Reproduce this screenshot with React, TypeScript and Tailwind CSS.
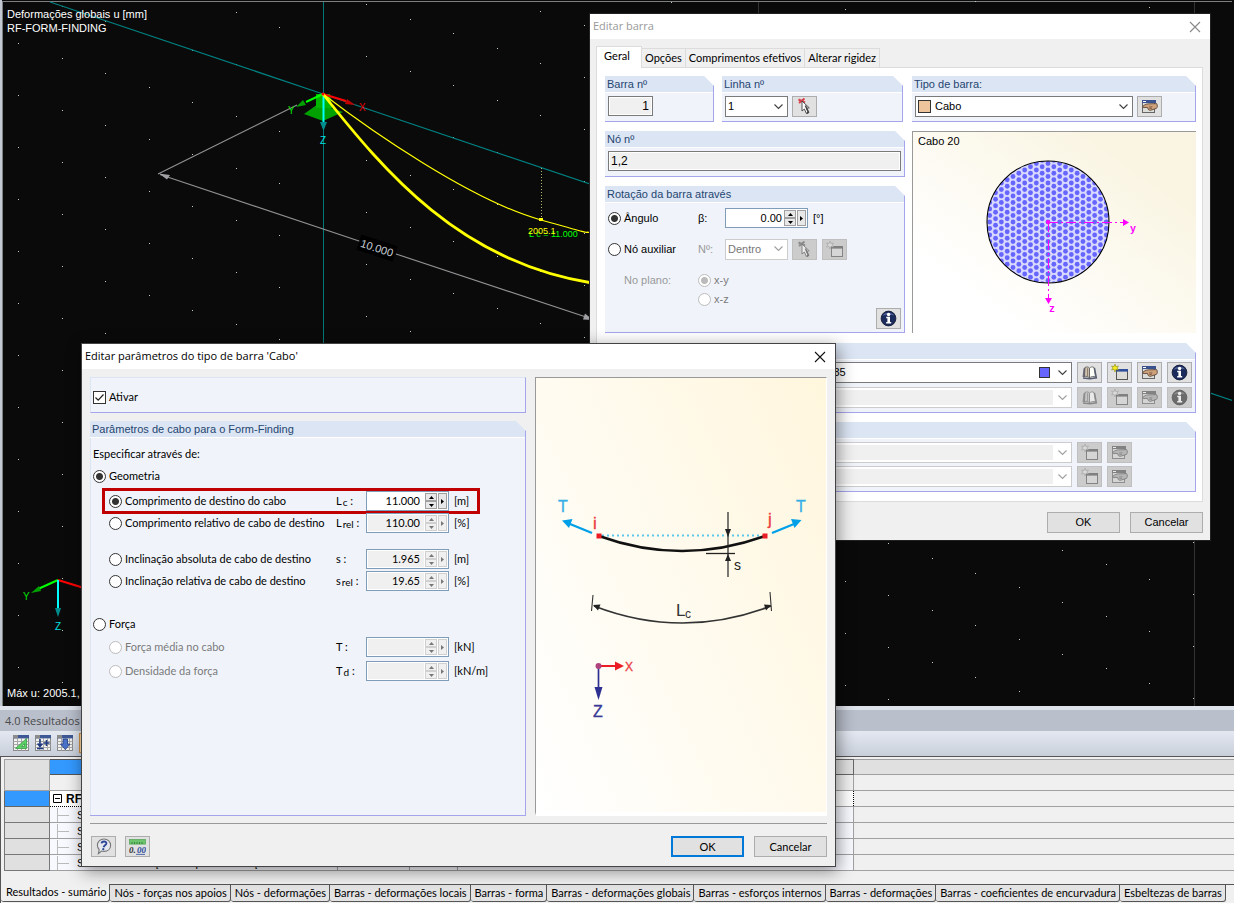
import { useState } from "react";
import type { ReactNode } from "react";

/* ---------- icons ---------- */

const ChevronIcon = ({ muted = false }: { muted?: boolean }) => (
  <svg width="9" height="6" viewBox="0 0 9 6" className="pointer-events-none absolute right-[4px] top-1/2 -translate-y-1/2">
    <path d="M0.5 0.5 L4.5 4.5 L8.5 0.5" fill="none" stroke={muted ? "#a0a0a0" : "#404040"} strokeWidth="1.1" />
  </svg>
);

const CloseIcon = ({ color }: { color: string }) => (
  <svg width="12" height="12" viewBox="0 0 12 12">
    <path d="M1 1 L11 11 M11 1 L1 11" stroke={color} strokeWidth="1.1" />
  </svg>
);

const PickIcon = () => (
  <svg width="17" height="17" viewBox="0 0 17 17">
    <path d="M2.5 1.5 L9 4.5 M8.5 0.5 L3 5" stroke="#d8404a" strokeWidth="2" />
    <path d="M6 3 L6 13 L8.4 11 L10.4 15.6 L12.6 14.7 L10.4 10.3 L13.2 9.8 Z" fill="#fff" stroke="#444" strokeWidth="0.9" />
    <path d="M9.4 7.5 L12.4 14.2 L10.8 15.2" fill="none" stroke="#444" strokeWidth="1.6" />
  </svg>
);

const NewWindowIcon = () => (
  <svg width="17" height="17" viewBox="0 0 17 17">
    <rect x="5.5" y="5.5" width="11" height="10" fill="#dddcd6" stroke="#555" />
    <rect x="5" y="5" width="12" height="2.6" fill="#2f4f9a" />
    <path d="M4 0 L4.9 2.6 L7.5 2 L6 4 L7.5 6 L4.9 5.4 L4 8 L3.1 5.4 L0.5 6 L2 4 L0.5 2 L3.1 2.6 Z" fill="#f6ee1c" stroke="#8f8a10" strokeWidth="0.6" />
  </svg>
);

const EditIcon = () => (
  <svg width="17" height="15" viewBox="0 0 17 15">
    <rect x="1.5" y="2.5" width="12" height="11" fill="#dcdcd8" stroke="#666" />
    <rect x="1" y="1" width="14" height="3" fill="#3a5390" />
    <path d="M2 2.5 H5" stroke="#fff" />
    <path d="M2 7.2 C4 5.2 7 4.6 9 4.8 L15.6 4.6 C16.6 6 16.6 8.4 15.4 9.4 L11 10.8 C9 11.8 7.6 11.2 7.2 10.2 L6.4 8.4 L3 8.6 C2 8.6 1.6 7.8 2 7.2 Z" fill="#cfa27c" stroke="#4c3a2c" strokeWidth="0.8" />
    <path d="M8 8 L11.4 7.8 M8.4 9.6 L11 9.2" stroke="#6b4d37" strokeWidth="0.8" />
  </svg>
);

const BookIcon = () => (
  <svg width="17" height="14" viewBox="0 0 17 14">
    <path d="M1.5 11 L2.5 2.5 L4 1.5 V11 Z" fill="#6a6a78" />
    <path d="M3.5 10.5 L4 1.5 C5.8 0.4 7.6 1 8.5 2.2 V12 C7 10.4 5 10 3.5 10.5 Z" fill="#cfc4b4" stroke="#555" strokeWidth="0.8" />
    <path d="M8.5 12 V2.2 C9.5 1 11.4 0.4 13 1.5 L14.5 11 C12.6 10 10 10.4 8.5 12 Z" fill="#fdfdf8" stroke="#555" strokeWidth="0.8" />
    <path d="M13.5 1.8 L15.4 11.8 L9 12.8 L2 12" fill="none" stroke="#555c70" strokeWidth="1.4" />
    <path d="M6.6 2.2 V10" stroke="#8d7763" strokeWidth="1" />
  </svg>
);

const InfoIcon = () => (
  <svg width="17" height="17" viewBox="0 0 17 17">
    <circle cx="8.5" cy="8.5" r="7.4" fill="#1b2b5c" stroke="#0c1530" strokeWidth="0.8" />
    <path d="M2.5 6 C4 2 12 1.4 14 5.6 C11 4 6 4.4 2.5 6 Z" fill="#7d92cc" opacity="0.6" />
    <circle cx="8.6" cy="4.5" r="1.7" fill="#fff" />
    <path d="M6.2 6.8 H10 V12 H11.2 V13.4 H6.2 V12 H7.4 V8.2 H6.2 Z" fill="#fff" />
  </svg>
);

const HelpIcon = () => (
  <svg width="17" height="17" viewBox="0 0 17 17">
    <path d="M9 1 C13 1 15.6 3.8 15.6 7.2 C15.6 10.8 13 13.4 9 13.4 C8 13.4 7.2 13.2 6.6 13 L3.4 15.6 L4.2 11.6 C2.9 10.4 2.4 9 2.4 7.2 C2.4 3.8 5 1 9 1 Z" fill="#e4e7ee" stroke="#777" strokeWidth="1.1" />
    <path d="M6.6 5.4 C6.8 2.8 11.6 2.8 11.4 5.4 C11.2 7.2 9 7.2 8.6 9.2" fill="none" stroke="#2c4596" strokeWidth="1.9" />
    <circle cx="8.3" cy="11.2" r="1.1" fill="#2c4596" />
  </svg>
);

const UnitsIcon = () => (
  <svg width="17" height="16" viewBox="0 0 17 16">
    <rect x="0.5" y="0.5" width="16" height="4.6" fill="#6cc46c" stroke="#5aa85f" strokeWidth="0.8" />
    <path d="M3 5 V3 M5.5 5 V3 M8 5 V3 M10.5 5 V3 M13 5 V3" stroke="#2e7a35" strokeWidth="0.8" />
    <g fontSize="9" fontStyle="italic" fontWeight="bold" fontFamily="Liberation Serif, serif">
      <text x="0" y="14" fill="#333">0.</text>
      <text x="8" y="14" fill="#2a4a9c">00</text>
    </g>
    <path d="M7 15.4 H16" stroke="#2a4a9c" strokeWidth="0.8" />
  </svg>
);

const TableIcon = ({ kind }: { kind: "slope" | "insert" | "down" | "chart" }) => (
  <svg width="16" height="16" viewBox="0 0 16 16">
    <rect x="0.5" y="0.5" width="15" height="15" fill="#f2f2f0" stroke="#8a8a8a" />
    <path d="M0.5 6.5 H15.5 M0.5 9.5 H15.5 M0.5 12.5 H15.5 M4.5 3.5 V15.5 M8.5 3.5 V15.5 M12.5 3.5 V15.5" stroke="#a8a8a8" />
    <rect x="0" y="0" width="16" height="3.4" fill="#3d5894" />
    <rect x="0" y="0" width="5" height="3.4" fill="#8b8b8b" />
    {kind === "slope" && <path d="M2.5 13.5 L13.5 3.5 V13.5 Z M8.5 11.5 H11.5 V8.8 Z" fill="#5cd267" fillRule="evenodd" stroke="#3c9a48" strokeWidth="0.8" />}
    {kind === "insert" && <path d="M5 4 V11 M2.6 8.6 L5 11.4 L7.4 8.6 M2 13.5 H8.5 M11.5 5 V11 M8.6 8 H14.6" fill="none" stroke="#1f3a80" strokeWidth="1.6" />}
    {kind === "down" && <path d="M6 4 H10.5 V9 H13 L8.3 14.6 L3.6 9 H6 Z" fill="#4a72c8" stroke="#1f3a80" strokeWidth="0.8" />}
    {kind === "chart" && <path d="M2 13 L6 8 L9 11 L14 5" fill="none" stroke="#1f3a80" strokeWidth="1.6" />}
  </svg>
);

/* ---------- form parts ---------- */

const radioClass =
  "m-0 size-[13px] shrink-0 appearance-none rounded-full border border-[#333] bg-white checked:bg-[radial-gradient(circle,#333_0px,#333_3px,#fff_4px)] disabled:border-[#bbb] disabled:checked:bg-[radial-gradient(circle,#bbb_0px,#bbb_3px,#fff_4px)]";

function Radio(props: { name: string; label: string; checked: boolean; onChange?: () => void; disabled?: boolean }) {
  return (
    <label className={`flex items-center gap-[3px] whitespace-nowrap ${props.disabled ? "text-[#7a7a7a]" : ""}`}>
      <input type="radio" name={props.name} checked={props.checked} disabled={props.disabled} onChange={() => props.onChange?.()} className={radioClass} />
      {props.label}
    </label>
  );
}

function Group({ title, htmlFor, children }: { title: string; htmlFor?: string; children: ReactNode }) {
  return (
    <section className="flex min-w-0 flex-col border-b border-r border-[#a5a5ee] bg-[#f0f4fa] [clip-path:polygon(0_0,calc(100%-10px)_0,100%_10px,100%_100%,0_100%)]">
      <div className="h-[17px] border-b border-white bg-[#dce5f4] px-[2px] font-['Liberation_Sans',Arial,sans-serif] leading-[16px] text-[#1f4570]">
        {htmlFor ? <label htmlFor={htmlFor}>{title}</label> : title}
      </div>
      {children}
    </section>
  );
}

function IconButton({ label, disabled, children }: { label: string; disabled?: boolean; children: ReactNode }) {
  return (
    <button
      type="button"
      aria-label={label}
      disabled={disabled}
      className="flex h-[21px] w-[25px] shrink-0 items-center justify-center border border-[#adadad] bg-[#e1e1e1] disabled:border-[#bfbfbf] disabled:bg-[#cccccc] disabled:[&>svg]:opacity-60 disabled:[&>svg]:grayscale"
    >
      {children}
    </button>
  );
}

function PushButton({ children, primary }: { children: ReactNode; primary?: boolean }) {
  return (
    <button
      type="button"
      className={`h-[21px] w-[73px] bg-[#e1e1e1] text-center leading-none ${primary ? "border-2 border-[#0078d7]" : "border border-[#adadad]"}`}
    >
      {children}
    </button>
  );
}

function NumberField(props: { id: string; value: string; disabled?: boolean; tight?: boolean }) {
  const face = props.disabled ? "bg-[#f0f0f0] border-[#d0d0d0]" : "bg-[#e8e8e8] border-[#a0a0a0]";
  const ink = props.disabled ? "#777" : "#000";
  return (
    <div className="flex h-[20px] w-[83px] gap-px border border-[#7f9db9] bg-white p-px">
      <input
        id={props.id}
        defaultValue={props.value}
        disabled={props.disabled}
        className={`min-w-0 flex-1 text-right text-black ${props.tight ? "pr-px" : "pr-[4px]"} ${props.disabled ? "bg-[#f0f0f0]" : "bg-white"}`}
      />
      <span className="flex w-[12px] flex-col">
        <button type="button" aria-label="Aumentar" disabled={props.disabled} className={`flex flex-1 items-center justify-center border ${face}`}>
          <svg width="5" height="3" viewBox="0 0 5 3"><path d="M0 3 L2.5 0 L5 3 Z" fill={ink} /></svg>
        </button>
        <button type="button" aria-label="Diminuir" disabled={props.disabled} className={`flex flex-1 items-center justify-center border ${face}`}>
          <svg width="5" height="3" viewBox="0 0 5 3"><path d="M0 0 L2.5 3 L5 0 Z" fill={ink} /></svg>
        </button>
      </span>
      <button type="button" aria-label="Mais" disabled={props.disabled} className={`flex w-[9px] items-center justify-center border ${face}`}>
        <svg width="3" height="5" viewBox="0 0 3 5"><path d="M0 0 L3 2.5 L0 5 Z" fill={ink} /></svg>
      </button>
    </div>
  );
}

function Combo(props: { id: string; value?: string; label?: string; disabled?: boolean; className?: string; selectClass?: string; children?: ReactNode }) {
  return (
    <div className={`relative h-[21px] border ${props.disabled ? "border-[#ccc]" : "border-[#7a7a7a]"} bg-white ${props.className ?? ""}`}>
      <select
        id={props.id}
        aria-label={props.label}
        disabled={props.disabled}
        className={`size-full appearance-none bg-transparent leading-[19px] opacity-100 disabled:text-[#777] ${props.selectClass ?? "pl-[2px]"}`}
      >
        <option>{props.value ?? ""}</option>
      </select>
      {props.children}
      <ChevronIcon muted={props.disabled} />
    </div>
  );
}

function EmptyCombo({ id, label }: { id: string; label: string }) {
  return (
    <Combo id={id} label={label} disabled className="min-w-0 flex-1" selectClass="pl-[2px]">
      <span className="pointer-events-none absolute bottom-[2px] left-[2px] right-[18px] top-[2px] bg-[#f0f0f0]" />
    </Combo>
  );
}

/* ---------- model view ---------- */

const gridDots: { x: number; y: number }[] = [];
for (let col = 0; col < 60; col++) {
  const first = (43.3 + 14.6 * col) % 52;
  for (let row = 0; row < 30; row++) {
    gridDots.push({ x: Math.round(18 + 43.5 * col), y: Math.round(first + 52 * row) });
  }
}

function ModelView() {
  return (
    <div className="relative min-h-[706px] flex-1 overflow-hidden border-l-2 border-[#c3c9d3] bg-[#0a0a0a]">
      <svg className="absolute inset-y-0 -left-[2px] size-full" fontFamily="Liberation Sans, Arial, sans-serif" fontSize="11">
        <path d="M2 1.5 H4000 M2.5 1 V3000" stroke="#7d7f80" fill="none" />
        {gridDots.map((d, i) => (
          <rect key={i} x={d.x} y={d.y} width="1" height="1" fill="#b9d2b9" />
        ))}
        <path d="M758.5 2 V3000 M1194.5 2 V3000" stroke="#333" />
        <path d="M323.5 2 V3000" stroke="#007878" fill="none" />
        <path d="M50 2 L323 94 L1830 602" stroke="#008080" fill="none" strokeWidth="1.2" />
        <path d="M158 174 L297 105 M160 174.5 L362 242 M396 254 L592 319" stroke="#909094" fill="none" strokeWidth="1.2" />
        <path d="M159 173.5 L170 175 L167 179.5 Z M593 320 L583 319.5 L585 313.5 Z" fill="#a0a0a4" />
        <g transform="translate(377 248) rotate(18)">
          <rect x="-19" y="-8" width="38" height="16" fill="#000" />
          <text x="0" y="4" textAnchor="middle" fontSize="11" fill="#c4ccd4">10.000</text>
        </g>
        <path d="M304 114 L318 104 L343 112 L323 121 Z" fill="#00a000" />
        <path d="M316 94 H330 L332 108 H316 Z" fill="#00b400" />
        <path d="M323 94 L306 102" stroke="#00ff00" strokeWidth="2" />
        <path d="M296 107 L303 100 L306 105 Z" fill="#00a000" />
        <path d="M323 94 L346 101" stroke="#f00" strokeWidth="2" />
        <path d="M355 105 L345 104 L347 99 Z" fill="#c00000" />
        <path d="M323.5 94 V122" stroke="#00ffff" strokeWidth="2" />
        <path d="M320 122 H327 L323.5 131 Z" fill="#008c8c" />
        <path d="M323 94 C370 130 470 200 541 220 S575 229 592 233" stroke="#ff0" fill="none" strokeWidth="1.2" />
        <path d="M323 94 C385 172 460 262 592 283" stroke="#ff0" fill="none" strokeWidth="2.8" />
        <circle cx="323" cy="94" r="1.5" fill="#f00" />
        <path d="M541.5 168 V218" stroke="#b8b870" strokeDasharray="1 2" />
        <rect x="539" y="218" width="4" height="3" fill="#ff0" />
        <text x="529" y="237" fontSize="9" fill="#00ff00">L c = 11.000</text>
        <text x="528" y="234" fontSize="9" fill="#ff0">2005.1</text>
        <text x="288" y="114" fontSize="10" fill="#00e000">Y</text>
        <text x="359" y="111" fontSize="10" fill="#f00000">X</text>
        <text x="320" y="144" fontSize="10" fill="#00e0e0">Z</text>

        <path d="M58 580 L38 589" stroke="#00ff00" strokeWidth="2" />
        <path d="M31 593 L39 586 L41 591 Z" fill="#00a000" />
        <path d="M58 580 L84 588" stroke="#f00" strokeWidth="2" />
        <path d="M58 580 V608" stroke="#00ffff" strokeWidth="2" />
        <path d="M55 608 H61 L58 617 Z" fill="#008c8c" />
        <text x="23" y="600" fontSize="10" fill="#00e000">Y</text>
        <text x="55" y="630" fontSize="10" fill="#00e0e0">Z</text>
      </svg>
      <div className="relative flex min-h-[706px] flex-col justify-between pb-[6px] pl-[5px] pt-[7px] leading-[14px] text-white">
        <p>
          Deformações globais u [mm]
          <br />
          RF-FORM-FINDING
        </p>
        <p>Máx u: 2005.1,</p>
      </div>
    </div>
  );
}

/* ---------- results panel ---------- */

const resultRows: { text: string; unit: string }[] = [
  { text: "Soma das cargas na direção X", unit: "kN" },
  { text: "Soma das cargas na direção Y", unit: "kN" },
  { text: "Soma das cargas na direção Z", unit: "kN" },
  { text: "Soma dos esforços de apoio na direção Y", unit: "kN" },
];

const sheetTabs = [
  "Nós - forças nos apoios",
  "Nós - deformações",
  "Barras - deformações locais",
  "Barras - forma",
  "Barras - deformações globais",
  "Barras - esforços internos",
  "Barras - deformações",
  "Barras - coeficientes de encurvadura",
  "Esbeltezas de barras",
];

function ResultsPanel() {
  const line = "border-[#a0a0a0]";
  return (
    <section className="flex flex-col overflow-hidden border-t-4 border-[#dfe3ec] bg-[#f0f0f0]">
      <h2 className="h-[21px] bg-[#b9bfcb] pl-[5px] font-['Open_Sans',sans-serif] text-[11px] leading-[21px] text-[#4a4a4a]">4.0 Resultados - sumário</h2>
      <div className="flex h-[25px] items-center gap-[6px] bg-linear-to-b from-[#e3e8f1] to-[#c9cfda] pb-px pl-[13px]">
        <button type="button" aria-label="Inclinação"><TableIcon kind="slope" /></button>
        <button type="button" aria-label="Inserir linha"><TableIcon kind="insert" /></button>
        <button type="button" aria-label="Descer"><TableIcon kind="down" /></button>
        <button type="button" aria-label="Gráfico" className="border border-[#d09040] bg-[#ffd9a0] p-px"><TableIcon kind="chart" /></button>
      </div>
      <div className="border-l border-t border-[#555] pl-[3px] pt-[2px]">
        <table className="w-full table-fixed border-collapse leading-[14px]">
          <colgroup>
            <col className="w-[45px]" />
            <col className="w-[288px]" />
            <col className="w-[72px]" />
            <col className="w-[48px]" />
            <col className="w-[396px]" />
            <col />
          </colgroup>
          <thead>
            <tr className="h-[15px] bg-[#e0e0e0]">
              <th rowSpan={2} className={`border ${line} bg-[#e0e0e0]`} />
              <th className="border border-[#555] bg-[#3399ff]" />
              <th className={`border ${line}`} />
              <th className={`border ${line}`} />
              <th className="border border-[#666]" />
              <th className={`border-y ${line}`} />
            </tr>
            <tr className="h-[16px]">
              <th className={`border ${line}`} />
              <th className={`border ${line}`} />
              <th className={`border ${line}`} />
              <th className={`border ${line}`} />
              <th className={`border-y ${line}`} />
            </tr>
          </thead>
          <tbody>
            <tr className="h-[16px]">
              <th className="border border-[#666] bg-[#3399ff]" />
              <td colSpan={4} className="border border-dotted border-black bg-white p-0 font-bold">
                <span className="flex h-[14px] items-center gap-[4px] pl-[3px] text-[12px]">
                  <svg width="9" height="9" viewBox="0 0 9 9"><path d="M0.5 0.5 H8.5 V8.5 H0.5 Z M2 4.5 H7" fill="none" stroke="#000" /></svg>
                  RF-FORM-FINDING
                </span>
              </td>
              <td className={`border-y ${line}`} />
            </tr>
            {resultRows.map((row) => (
              <tr key={row.text} className="h-[16px]">
                <th className="border border-[#777] bg-[#e0e0e0]" />
                <td className={`border-x border-b ${line} bg-[#f8f9ff] p-0`}>
                  <span className="flex h-[14px] items-center gap-[8px] pl-[7px]">
                    <svg width="12" height="14" viewBox="0 0 12 14"><path d="M0.5 0 V14 M0 7.5 H12" stroke="#bbb" /></svg>
                    {row.text}
                  </span>
                </td>
                <td className={`border ${line} bg-[#f8f9ff]`} />
                <td className={`border ${line} bg-[#f8f9ff] p-0 pl-[2px]`}>{row.unit}</td>
                <td className={`border ${line} bg-[#f8f9ff]`} />
                <td className={`border-y ${line}`} />
              </tr>
            ))}
          </tbody>
        </table>
        <div className="h-[13px]" />
      </div>
      <nav className="flex h-[20px] items-start whitespace-nowrap border-l border-[#555] font-['Lato',sans-serif] text-[11px]">
        <a href="#sumario" className="h-[18px] rounded-b-[3px] border-b border-r border-[#555] pl-[5px] pr-[3px] leading-[16px]">Resultados - sumário</a>
        {sheetTabs.map((tab) => (
          <a key={tab} href="#tabela" className="h-[18px] rounded-b-[3px] border-b border-r border-t border-[#555] bg-[#e3e3e3] pl-[4px] pr-[3px] leading-[16px]">
            {tab}
          </a>
        ))}
        <span className="h-px flex-1 bg-[#555]" />
      </nav>
    </section>
  );
}

/* ---------- member dialog ---------- */

const strands: { x: number; y: number }[] = [];
for (let col = -10; col <= 10; col++) {
  for (let row = -10; row <= 10; row++) {
    const x = 5.83 * col;
    const y = 6.5 * row + (col % 2 !== 0 ? 3.25 : 0);
    if (Math.hypot(x, y) < 63) strands.push({ x: 67 + x, y: 65 + y });
  }
}

function CrossSection() {
  return (
    <div className="flex h-[202px] flex-col border-l border-t border-[#999] bg-linear-to-tr from-white from-20% to-[#faf5e3] to-80% pl-[5px] pt-[3px]">
      <p className="leading-[13px]">Cabo 20</p>
      <svg width="160" height="160" viewBox="0 0 160 160" className="ml-[63px] mt-[9px]" fontFamily="Liberation Mono, monospace" fontSize="11">
        <defs>
          <clipPath id="section-outline">
            <circle cx="67" cy="65" r="61" />
          </clipPath>
        </defs>
        <circle cx="67" cy="65" r="61" fill="#d9d9ff" />
        <g clipPath="url(#section-outline)">
          {strands.map((s, i) => (
            <circle key={i} cx={s.x} cy={s.y} r="2.4" fill="#6666ff" />
          ))}
        </g>
        <circle cx="67" cy="65" r="61" fill="none" stroke="#000" strokeWidth="1.1" />
        <path d="M67 65.5 H142" stroke="#f0f" strokeDasharray="10 3 2 3" />
        <path d="M67.5 65 V142" stroke="#f0f" strokeDasharray="10 3 2 3" />
        <circle cx="67" cy="65" r="2" fill="#f0f" />
        <path d="M142 62 L148 65.5 L142 69 Z M64 141 H71 L67.5 147 Z" fill="#f0f" />
        <text x="149" y="75" fill="#f0f" fontWeight="bold" fontSize="10">y</text>
        <text x="68" y="155" fill="#f0f" fontWeight="bold" fontSize="10">z</text>
      </svg>
    </div>
  );
}

function MemberDialog() {
  const [rotation, setRotation] = useState("angle");
  return (
    <div role="dialog" aria-labelledby="member-title" className="absolute left-[590px] top-[14px] flex w-[620px] flex-col bg-[#f0f0f0] shadow-[0_0_0_1px_#222]">
      <header className="flex h-[25px] items-center justify-between bg-white pl-[3px] pr-[9px]">
        <h2 id="member-title" className="font-['Open_Sans',sans-serif] text-[11px] text-[#999]">Editar barra</h2>
        <button type="button" aria-label="Fechar"><CloseIcon color="#888" /></button>
      </header>
      <div role="tablist" className="flex h-[28px] items-end pl-[6px] font-['Lato',sans-serif]">
        <button type="button" role="tab" aria-selected="true" className="relative z-10 -mb-px h-[22px] w-[46px] border border-b-0 border-[#dcdcdc] bg-white pb-[4px] pr-[4px] leading-none">Geral</button>
        {["Opções", "Comprimentos efetivos", "Alterar rigidez"].map((t) => (
          <button key={t} type="button" role="tab" aria-selected="false" className="h-[19px] whitespace-nowrap border-r border-t border-[#dcdcdc] px-[3px] pb-[2px] leading-none">{t}</button>
        ))}
      </div>
      <div className="ml-[6px] mr-[7px] flex flex-col gap-[9px] border border-[#dcdcdc] bg-white pb-[9px] pl-[8px] pr-[6px] pt-[8px]">
        <div className="flex gap-[7px] pb-px">
          <div className="flex w-[300px] flex-col gap-[9px]">
            <div className="flex gap-[8px]">
              <div className="w-[109px]">
                <Group title="Barra nº" htmlFor="bar-no">
                  <div className="flex h-[28px] px-[3px] pt-[3px]">
                    <input id="bar-no" readOnly value="1" className="h-[20px] w-[45px] border border-[#7a7a7a] bg-[#f0f0f0] pr-[3px] text-right text-[12px] outline-1 -outline-offset-2 outline-white" />
                  </div>
                </Group>
              </div>
              <div className="w-[181px]">
                <Group title="Linha nº" htmlFor="line-no">
                  <div className="flex h-[28px] gap-[4px] px-[3px] pt-[3px]">
                    <Combo id="line-no" value="1" className="w-[63px]" />
                    <IconButton label="Selecionar linha"><PickIcon /></IconButton>
                  </div>
                </Group>
              </div>
            </div>
            <Group title="Nó nº" htmlFor="node-no">
              <div className="flex h-[28px] px-[3px] pt-[3px]">
                <input id="node-no" readOnly value="1,2" className="h-[20px] min-w-0 flex-1 border border-[#7a7a7a] bg-[#f0f0f0] pl-[2px] text-[12px] outline-1 -outline-offset-2 outline-white" />
              </div>
            </Group>
            <Group title="Rotação da barra através">
              <div className="flex h-[129px] flex-col pl-[3px]">
                <div className="grid h-[30px] grid-cols-[90px_27px_83px_auto] items-center">
                  <Radio name="rotation" label="Ângulo" checked={rotation === "angle"} onChange={() => setRotation("angle")} />
                  <label htmlFor="beta">β:</label>
                  <NumberField id="beta" value="0.00" tight />
                  <span className="pl-[5px]">[°]</span>
                </div>
                <div className="grid h-[32px] grid-cols-[90px_27px_63px_auto] items-center">
                  <Radio name="rotation" label="Nó auxiliar" checked={rotation === "node"} onChange={() => setRotation("node")} />
                  <label htmlFor="aux-node" className="text-[#999]">Nº:</label>
                  <Combo id="aux-node" value="Dentro" disabled />
                  <span className="flex gap-[5px] pl-[4px]">
                    <IconButton label="Selecionar nó" disabled><PickIcon /></IconButton>
                    <IconButton label="Novo nó" disabled><NewWindowIcon /></IconButton>
                  </span>
                </div>
                <div className="grid grid-cols-[90px_auto]">
                  <span className="pl-[16px] pt-[9px] leading-[13px] text-[#999]">No plano:</span>
                  <div className="flex flex-col gap-[6px] pt-[9px] leading-[13px]">
                    <Radio name="plane" label="x-y" checked disabled />
                    <Radio name="plane" label="x-z" checked={false} disabled />
                  </div>
                </div>
                <div className="flex justify-end pr-[3px] pt-[2px]">
                  <IconButton label="Informações"><InfoIcon /></IconButton>
                </div>
              </div>
            </Group>
          </div>
          <div className="flex min-w-0 flex-1 flex-col gap-[9px]">
            <Group title="Tipo de barra:" htmlFor="bar-type">
              <div className="flex h-[28px] gap-[4px] px-[3px] pt-[3px]">
                <Combo id="bar-type" value="Cabo" className="w-[218px]" selectClass="pl-[19px]">
                  <span className="pointer-events-none absolute left-[2px] top-[3px] size-[13px] border border-[#333] bg-[#eec49c]" />
                </Combo>
                <IconButton label="Editar tipo de barra"><EditIcon /></IconButton>
              </div>
            </Group>
            <CrossSection />
          </div>
        </div>
        <Group title="Seção transversal">
          <div className="flex h-[52px] flex-col gap-[4px] pl-[3px] pr-[3px] pt-[2px]">
            <div className="flex gap-[5px]">
              <Combo id="section-start" label="Início da barra" value="Cabo 20 | Aço S 235" className="min-w-0 flex-1" selectClass="pl-[136px]">
                <span className="pointer-events-none absolute right-[21px] top-[4px] size-[11px] border border-[#333] bg-[#6666ff]" />
              </Combo>
              <IconButton label="Biblioteca"><BookIcon /></IconButton>
              <IconButton label="Nova seção"><NewWindowIcon /></IconButton>
              <IconButton label="Editar seção"><EditIcon /></IconButton>
              <IconButton label="Informações da seção"><InfoIcon /></IconButton>
            </div>
            <div className="flex gap-[5px]">
              <EmptyCombo id="section-end" label="Fim da barra" />
              <IconButton label="Biblioteca" disabled><BookIcon /></IconButton>
              <IconButton label="Nova seção" disabled><NewWindowIcon /></IconButton>
              <IconButton label="Editar seção" disabled><EditIcon /></IconButton>
              <IconButton label="Informações da seção" disabled><InfoIcon /></IconButton>
            </div>
          </div>
        </Group>
        <Group title="Articulação na barra">
          <div className="flex h-[52px] flex-col gap-[3px] pl-[3px] pr-[63px] pt-[3px]">
            {["Articulação inicial", "Articulação final"].map((name) => (
              <div key={name} className="flex gap-[5px]">
                <EmptyCombo id={name} label={name} />
                <IconButton label={`Nova: ${name}`} disabled><NewWindowIcon /></IconButton>
                <IconButton label={`Editar: ${name}`} disabled><EditIcon /></IconButton>
              </div>
            ))}
          </div>
        </Group>
      </div>
      <footer className="flex justify-end gap-[10px] pb-[7px] pr-[7px] pt-[10px]">
        <PushButton>OK</PushButton>
        <PushButton>Cancelar</PushButton>
      </footer>
    </div>
  );
}

/* ---------- cable parameters dialog ---------- */

function CableSketch() {
  return (
    <div className="min-w-0 border-b-4 border-l border-r border-t border-b-white border-l-[#999] border-r-white border-t-[#999] bg-linear-[65deg] from-white to-[#fff6dd]">
      <svg width="290" height="400" viewBox="0 0 290 400" fontFamily="Liberation Sans, Arial, sans-serif">
        <path d="M66 157.5 H226" stroke="#5cc8ee" strokeWidth="2" strokeDasharray="2 3" />
        <path d="M63 158 Q146 188 229 158" fill="none" stroke="#111" strokeWidth="2.4" />
        <path d="M192 134 V199" stroke="#222" strokeWidth="1.2" />
        <path d="M170 175.5 H199" stroke="#222" strokeWidth="1.3" />
        <path d="M189 151 H195 L192 159 Z M189 183 H195 L192 176 Z" fill="#222" />
        <path d="M60.5 155.5 h5 v5 h-5 Z M226.5 155.5 h5 v5 h-5 Z" fill="#ec1c24" />
        <path d="M56 155 L34 146 M236 155 L258 146" stroke="#00a0e8" strokeWidth="2.4" />
        <path d="M26 142.5 L36.5 141 L33 150 Z M265.5 142 L255 141 L258.5 150 Z" fill="#00a0e8" />
        <g fontSize="16" fill="#34aee6" stroke="#34aee6" strokeWidth="0.3">
          <text x="22" y="134">T</text>
          <text x="260" y="134">T</text>
        </g>
        <g fontSize="17" fill="#ec3a40" stroke="#ec3a40" strokeWidth="0.3">
          <text x="57" y="151">i</text>
          <text x="232" y="147">j</text>
        </g>
        <text x="198" y="192" fontSize="14" fill="#222">s</text>
        <path d="M58 228 Q146 262 235 228" fill="none" stroke="#333" strokeWidth="1.7" />
        <path d="M57 217 L55.5 233 M234 214 L235.5 233" stroke="#333" strokeWidth="1.1" />
        <path d="M57 227 L64.5 226.5 L62 232.5 Z M235 227 L228 226.5 L230 232.5 Z" fill="#222" />
        <text x="140" y="238" fontSize="17" fill="#333">L</text>
        <text x="149" y="240" fontSize="12" fill="#333">c</text>
        <path d="M63 288 H80" stroke="#ec1c24" strokeWidth="2" />
        <path d="M79 283.5 L88 288 L79 292.5 Z" fill="#ec1c24" />
        <path d="M62.5 288 V312" stroke="#2e3192" strokeWidth="1.7" />
        <path d="M58.5 309 H66.5 L62.5 322 Z" fill="#2e3192" />
        <circle cx="62.5" cy="288" r="3" fill="#b0427e" />
        <text x="89" y="293" fontSize="12" fill="#ec3a40" stroke="#ec3a40" strokeWidth="0.3">X</text>
        <text x="57" y="339" fontSize="16" fill="#3a3a96" stroke="#3a3a96" strokeWidth="0.3">Z</text>
      </svg>
    </div>
  );
}

type ParamRowProps = {
  id: string;
  label: string;
  symbol: ReactNode;
  value: string;
  unit: string;
  checked?: boolean;
  off?: boolean;
  className?: string;
  highlight?: boolean;
  onSelect?: () => void;
};

function ParamRow(p: ParamRowProps) {
  return (
    <div className={`relative grid h-[22px] grid-cols-[227px_30px_83px_auto] items-center pl-[18px] ${p.className ?? ""}`}>
      <Radio name="cable-param" label={p.label} checked={!!p.checked} disabled={p.off} onChange={p.onSelect} />
      <label htmlFor={p.id}>{p.symbol}</label>
      <NumberField id={p.id} value={p.value} disabled={!p.checked} />
      <span className="pl-[5px]">{p.unit}</span>
      {p.highlight && <span className="pointer-events-none absolute -bottom-[2px] -top-[2px] left-[11px] w-[378px] border-3 border-[#c00000]" />}
    </div>
  );
}

const Sub = ({ base, sub }: { base: string; sub: string }) => (
  <span>
    {base}
    <span className="relative top-px pl-px text-[10px]">{sub}</span>
    {" :"}
  </span>
);

function CableDialog() {
  const [param, setParam] = useState("lc");
  const [mode, setMode] = useState("geometry");
  const [active, setActive] = useState(true);
  return (
    <div
      role="dialog"
      aria-labelledby="cable-title"
      className="absolute left-[81px] top-[343px] flex w-[755px] flex-col border border-[#444] bg-[#f0f0f0] font-['Lato',sans-serif] shadow-[2px_4px_16px_rgba(0,0,0,0.45)]"
    >
      <header className="flex h-[25px] items-center justify-between bg-white pl-[3px] pr-[9px]">
        <h2 id="cable-title" className="font-['Open_Sans',sans-serif] text-[11px]">Editar parâmetros do tipo de barra 'Cabo'</h2>
        <button type="button" aria-label="Fechar"><CloseIcon color="#111" /></button>
      </header>
      <div className="grid grid-cols-[436px_1fr] gap-[9px] px-[8px] pt-[8px]">
        <div className="flex flex-col gap-[8px]">
          <section className="flex h-[36px] items-center border border-b-[#a5a5ee] border-l-[#dce5f4] border-r-[#a5a5ee] border-t-[#dce5f4] bg-[#f0f4fa] pl-[2px] pt-[4px]">
            <label className="flex items-center gap-[3px]">
              <span className="relative flex">
                <input type="checkbox" checked={active} onChange={() => setActive(!active)} className="m-0 size-[13px] appearance-none border border-[#333] bg-white" />
                {active && (
                  <svg width="13" height="13" viewBox="0 0 13 13" className="pointer-events-none absolute inset-0">
                    <path d="M2.5 6.5 L5.2 9.2 L10.5 3.5" fill="none" stroke="#222" strokeWidth="1.2" />
                  </svg>
                )}
              </span>
              Ativar
            </label>
          </section>
          <Group title="Parâmetros de cabo para o Form-Finding">
            <div className="flex h-[377px] flex-col border-l border-[#dce5f4] pt-[5px]">
              <p className="pl-[2px] leading-[22px]">Especificar através de:</p>
              <div className="flex h-[23px] items-center pl-[2px]">
                <Radio name="cable-mode" label="Geometria" checked={mode === "geometry"} onChange={() => setMode("geometry")} />
              </div>
              <ParamRow id="p-lc" label="Comprimento de destino do cabo" symbol={<Sub base="L" sub="c" />} value="11.000" unit="[m]" checked={param === "lc"} onSelect={() => setParam("lc")} highlight className="mt-[2px]" />
              <ParamRow id="p-lrel" label="Comprimento relativo de cabo de destino" symbol={<Sub base="L" sub="rel" />} value="110.00" unit="[%]" checked={param === "lrel"} onSelect={() => setParam("lrel")} />
              <ParamRow id="p-s" label="Inclinação absoluta de cabo de destino" symbol="s :" value="1.965" unit="[m]" checked={param === "s"} onSelect={() => setParam("s")} className="mt-[14px]" />
              <ParamRow id="p-srel" label="Inclinação relativa de cabo de destino" symbol={<Sub base="s" sub="rel" />} value="19.65" unit="[%]" checked={param === "srel"} onSelect={() => setParam("srel")} />
              <div className="mt-[21px] flex h-[22px] items-center pl-[2px]">
                <Radio name="cable-mode" label="Força" checked={mode === "force"} onChange={() => setMode("force")} />
              </div>
              <ParamRow id="p-t" label="Força média no cabo" symbol="T :" value="" unit="[kN]" off className="mt-px" />
              <ParamRow id="p-td" label="Densidade da força" symbol={<Sub base="T" sub="d" />} value="" unit="[kN/m]" off className="mt-[2px]" />
            </div>
          </Group>
        </div>
        <CableSketch />
      </div>
      <footer className="mx-[8px] mt-[7px] flex items-center justify-between border-t border-[#999] pb-[9px] pl-px pt-[12px]">
        <div className="flex gap-[9px]">
          <IconButton label="Ajuda"><HelpIcon /></IconButton>
          <IconButton label="Unidades"><UnitsIcon /></IconButton>
        </div>
        <div className="flex gap-[10px]">
          <PushButton primary>OK</PushButton>
          <PushButton>Cancelar</PushButton>
        </div>
      </footer>
    </div>
  );
}

export default function App() {
  return (
    <main className="relative flex min-h-screen flex-col overflow-hidden bg-[#f0f0f0] font-['Liberation_Sans',Arial,sans-serif] text-[11px] text-black">
      <ModelView />
      <ResultsPanel />
      <MemberDialog />
      <CableDialog />
    </main>
  );
}
